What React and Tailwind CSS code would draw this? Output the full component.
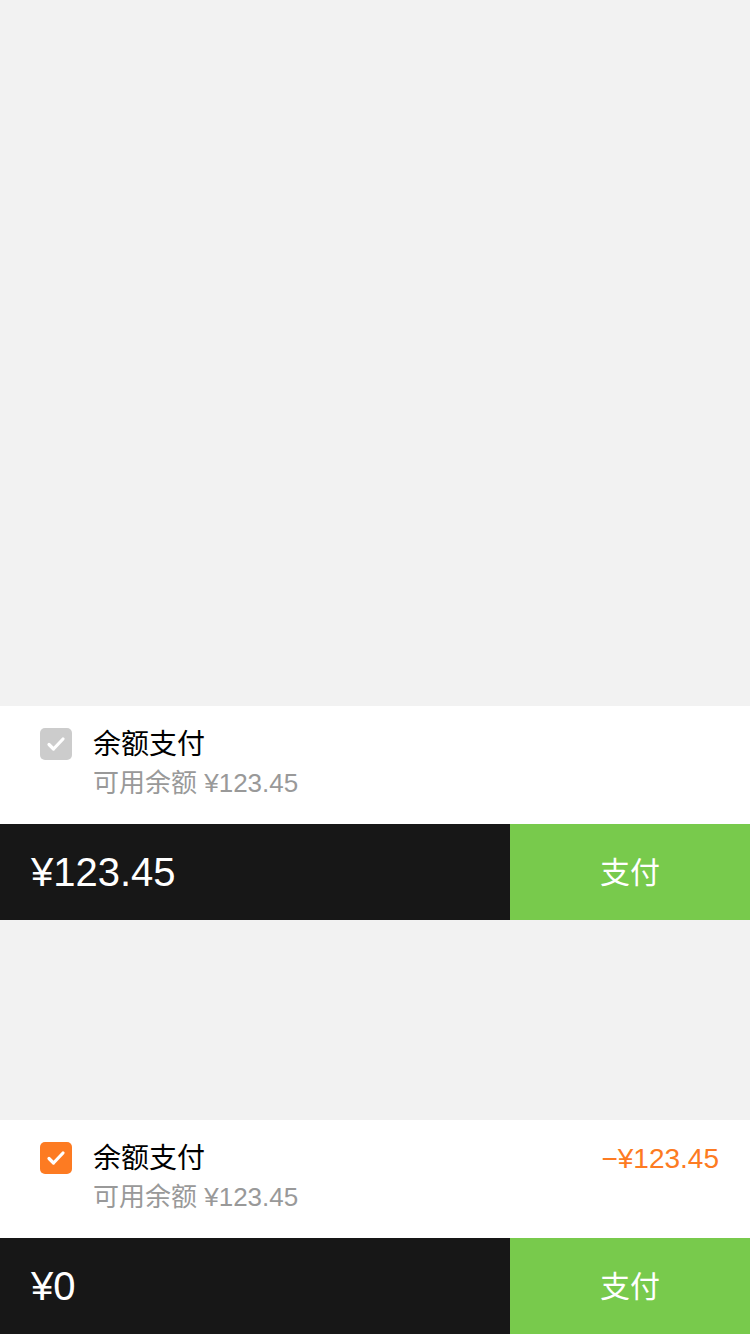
const font = { fontFamily: '"Liberation Sans", "Noto Sans CJK SC", sans-serif' };

function Check({ on }) {
  return (
    <div
      className={`w-[32px] h-[32px] rounded-[5px] flex items-center justify-center shrink-0 ${
        on ? "bg-[#fd7b22]" : "bg-[#cccccc]"
      }`}
    >
      <svg width="24" height="24" viewBox="0 0 24 24" fill="none">
        <path d="M5 12.5l4.5 4.5 9.5-10" stroke="#fff" strokeWidth="3.2" strokeLinecap="round" strokeLinejoin="round" />
      </svg>
    </div>
  );
}

function Panel({ on, total }) {
  return (
    <div>
      <div className="bg-white h-[118px] pt-[22px] pl-[40px] pr-[31px] flex">
        <Check on={on} />
        <div className="ml-[21px] flex-1">
          <div className="flex justify-between">
            <div className="text-[28px] leading-[34px] text-black">余额支付</div>
            {on && <div className="text-[28px] leading-[34px] text-[#fd7b22]">−¥123.45</div>}
          </div>
          <div className="text-[26px] leading-[32px] mt-[5px] text-[#999999]">可用余额 ¥123.45</div>
        </div>
      </div>
      <div className="flex h-[96px]">
        <div className="flex-1 bg-[#171717] flex items-center pl-[31px] text-white text-[40px]">{total}</div>
        <div className="w-[240px] bg-[#78ca4c] flex items-center justify-center text-white text-[30px]">支付</div>
      </div>
    </div>
  );
}

export default function App() {
  return (
    <div className="w-[750px] h-[1334px] bg-[#f2f2f2] flex flex-col" style={font}>
      <div className="h-[706px]" />
      <Panel on={false} total="¥123.45" />
      <div className="h-[200px]" />
      <Panel on={true} total="¥0" />
    </div>
  );
}
